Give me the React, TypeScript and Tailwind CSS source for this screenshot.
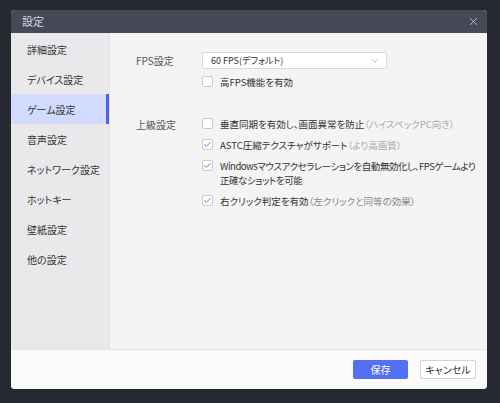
import { Check, ChevronDown, X } from 'lucide-react';

const MENU = ['詳細設定', 'デバイス設定', 'ゲーム設定', '音声設定', 'ネットワーク設定', 'ホットキー', '壁紙設定', '他の設定'];

function Box({ checked }: { checked?: boolean }) {
  return (
    <span className="mt-[1px] flex h-[11px] w-[11px] shrink-0 items-center justify-center rounded-[2px] border border-[#c9c9d2] bg-white">
      {checked && <Check size={9} strokeWidth={2.5} className="text-[#5b6ee8]" />}
    </span>
  );
}

function Option({ checked, tight, children }: { checked?: boolean; tight?: boolean; children: React.ReactNode }) {
  return (
    <div className="flex gap-[7px] leading-[14px]">
      <Box checked={checked} />
      <span className={tight ? 'whitespace-nowrap tracking-[-0.45px]' : 'whitespace-nowrap'}>{children}</span>
    </div>
  );
}

export default function App() {
  return (
    <div
      className="h-[403px] w-[500px] bg-[#262932] pl-[11px] pr-[13px] pt-[10px] [font-feature-settings:'palt']"
      style={{ fontFamily: '"Noto Sans CJK JP", "Noto Sans", sans-serif' }}
    >
      <div className="flex h-[379px] flex-col overflow-hidden rounded-[4px] bg-[#f4f4f4]">
        <div className="flex h-[23px] items-center justify-between bg-[#464957] pl-[11px] pr-[7px] text-[11px] text-[#d6d7de]">
          <span>設定</span>
          <X size={13} strokeWidth={1.5} className="text-[#c9cad2]" />
        </div>
        <div className="flex flex-1">
          <div className="w-[99px] shrink-0 border-r border-[#dedee2] bg-[#e9e9ec] pt-[1px]">
            {MENU.map((m) => (
              <div
                key={m}
                className={
                  m === 'ゲーム設定'
                    ? 'flex h-[30px] items-center border-r-[3px] border-[#4c63ea] bg-[#d2dbfd] pl-[16px] text-[10px] text-[#333]'
                    : 'flex h-[30px] items-center pl-[16px] text-[10px] text-[#333]'
                }
              >
                {m}
              </div>
            ))}
          </div>
          <div className="min-w-0 flex-1 pl-[26px] pt-[19px] text-[9.5px] text-[#333]">
            <div className="flex">
              <div className="w-[66px] shrink-0 pt-[1px] text-[10px] text-[#555]">FPS設定</div>
              <div className="flex flex-col gap-[6px]">
                <div className="flex h-[17px] w-[185px] items-center justify-between rounded-[2px] border border-[#d8d8de] bg-white pl-[8px] pr-[6px] text-[9px]">
                  <span>60 FPS(デフォルト)</span>
                  <ChevronDown size={10} className="text-[#aaa]" />
                </div>
                <Option>高FPS機能を有効</Option>
              </div>
            </div>
            <div className="mt-[28px] flex">
              <div className="w-[66px] shrink-0 text-[10px] text-[#555]">上級設定</div>
              <div className="flex flex-col gap-[7px]">
                <Option>
                  垂直同期を有効し、画面異常を防止<span className="text-[#aaa]">（ハイスペックPC向き）</span>
                </Option>
                <Option checked>
                  ASTC圧縮テクスチャがサポート<span className="text-[#aaa]">（より高画質）</span>
                </Option>
                <Option checked tight>
                  Windowsマウスアクセラレーションを自動無効化し、FPSゲームより
                  <br />
                  正確なショットを可能
                </Option>
                <Option checked>
                  右クリック判定を有効<span className="text-[#888]">（左クリックと同等の効果）</span>
                </Option>
              </div>
            </div>
          </div>
        </div>
        <div className="flex h-[40px] items-center justify-end gap-[12px] border-t border-[#e4e4e8] bg-[#fafafa] pr-[11px]">
          <button className="h-[19px] w-[55px] rounded-[2px] bg-[#5470f2] text-[10px] text-white">保存</button>
          <button className="h-[19px] w-[56px] rounded-[2px] border border-[#d4d4da] bg-white text-[10px] text-[#333]">キャンセル</button>
        </div>
      </div>
    </div>
  );
}
